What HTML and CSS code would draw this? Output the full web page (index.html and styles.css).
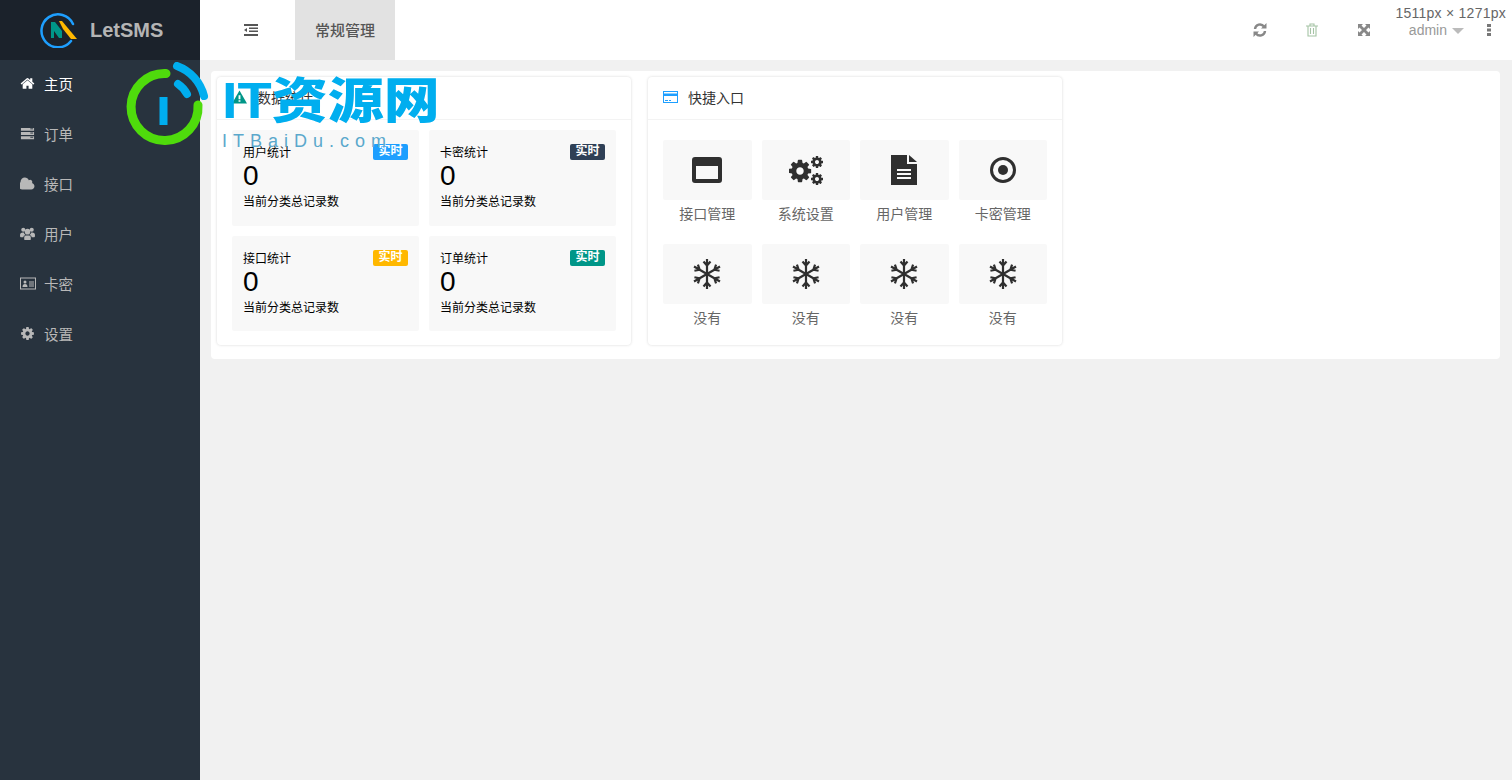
FILE: index.html
```html
<!DOCTYPE html>
<html lang="en">
<head>
    <meta charset="UTF-8">
    <title>LetSMS</title>
    <link rel="stylesheet" href="styles.css">
</head>
<body>
    <svg class="defs" width="0" height="0">
        <symbol id="i-cog" viewBox="0 0 1792 1792"><path d="M1152 896q0-106-75-181t-181-75-181 75-75 181 75 181 181 75 181-75 75-181zm512-109v222q0 12-8 23t-20 13l-185 28q-19 54-39 91 35 50 107 138 10 12 10 25t-9 23q-27 37-99 108t-94 71q-12 0-26-9l-138-108q-44 23-91 38-16 136-29 186-7 28-36 28h-222q-14 0-24.500-8.500t-11.500-21.500l-28-184q-49-16-90-37l-141 107q-10 9-25 9-14 0-25-11-126-114-165-168-7-10-7-23 0-12 8-23 15-21 51-66.500t54-70.500q-27-50-41-99l-183-27q-13-2-21-12.500t-8-23.500v-222q0-12 8-23t19-13l186-28q14-46 39-92-40-57-107-138-10-12-10-24 0-10 9-23 26-36 98.500-107.500t94.500-71.500q13 0 26 10l138 107q44-23 91-38 16-136 29-186 7-28 36-28h222q14 0 24.500 8.500t11.500 21.500l28 184q49 16 90 37l142-107q9-9 24-9 13 0 25 10 129 119 165 170 7 8 7 22 0 12-8 23-15 21-51 66.500t-54 70.500q26 50 41 98l183 28q13 2 21 12.500t8 23.500z"/></symbol>
        <symbol id="i-snow" viewBox="0 0 30 30">
            <g fill="none" stroke="currentColor" stroke-width="2.200">
                <g id="snow-arm"><path d="M15 15V0M11.500 2.500l3.500 4 3.500-4M15 15v15M11.500 27.500l3.500-4 3.500 4"/></g>
                <use href="#snow-arm" transform="rotate(60 15 15)"/>
                <use href="#snow-arm" transform="rotate(120 15 15)"/>
            </g>
        </symbol>
    </svg>

    <aside class="sidebar">
        <div class="logo">
            <svg class="logo-mark" width="38" height="36" viewBox="0 0 38 36">
                <path d="M31 29A16.500 16.500 0 1 1 33 12" fill="none" stroke="#1e9fff" stroke-width="2.500" stroke-linecap="round"/>
                <path d="M11 26V10h4l7 9v7h-3l-5-7v7z" fill="#009688"/>
                <path d="M19 9h3l15 18h-6l-8-10z" fill="#ffb800"/>
            </svg>
            <span class="logo-text">LetSMS</span>
        </div>
        <ul class="menu">
            <li class="menu-item active">
                <svg class="menu-icon" viewBox="0 0 1792 1792"><path d="M1472 992v480q0 26-19 45t-45 19h-384v-384h-256v384h-384q-26 0-45-19t-19-45v-480q0-1 .5-3t.5-3l575-474 575 474q1 2 1 6zm223-69l-62 74q-8 9-21 11h-3q-13 0-21-7l-692-577-692 577q-12 8-24 7-13-2-21-11l-62-74q-8-10-7-23.500t11-21.500l719-599q32-26 76-26t76 26l244 204v-195q0-14 9-23t23-9h192q14 0 23 9t9 23v408l219 182q10 8 11 21.500t-7 23.500z"/></svg>
                <span>主页</span>
            </li>
            <li class="menu-item">
                <svg class="menu-icon" viewBox="0 0 16 14"><path d="M1 1h14v3H1zM1 5.500h14v3H1zM1 10h14v3H1z"/><path d="M11 2h3M11 6.500h3M11 11h3" stroke="#28333e"/></svg>
                <span>订单</span>
            </li>
            <li class="menu-item">
                <svg class="menu-icon" viewBox="0 0 1792 1792"><path d="M1728 1216q0 159-112.500 271.500t-271.500 112.500h-1088q-185 0-316.500-131.500t-131.500-316.500q0-132 71-241.500t187-163.500q-2-28-2-43 0-212 150-362t362-150q158 0 286.500 88t187.500 230q70-62 166-62 106 0 181 75t75 181q0 75-41 138 129 30 213 134.500t84 239.500z"/></svg>
                <span>接口</span>
            </li>
            <li class="menu-item">
                <svg class="menu-icon" viewBox="0 0 16 14"><circle cx="3.500" cy="3" r="2.200"/><circle cx="12.500" cy="3" r="2.200"/><circle cx="8" cy="5" r="3"/><path d="M0 9q0-3 3-3h1q.5 2 2 2.500Q3.500 9 3.500 11H1q-1 0-1-2zM16 9q0-3-3-3h-1q-.5 2-2 2.500 2.500.5 2.500 2.500H15q1 0 1-2zM4.500 11q0-2 2-2h3q2 0 2 2v2q0 1-1 1h-5q-1 0-1-1z"/></svg>
                <span>用户</span>
            </li>
            <li class="menu-item">
                <svg class="menu-icon wide" viewBox="0 0 16 12"><path fill-rule="evenodd" d="M0 0h16v12H0zM1 1v10h14V1z"/><circle cx="5" cy="4.500" r="1.500"/><path d="M2.500 9.500q0-3 2.500-3t2.500 3zM9 4h5v1H9zM9 6h5v1H9zM9 8h5v1H9z"/></svg>
                <span>卡密</span>
            </li>
            <li class="menu-item">
                <svg class="menu-icon" viewBox="0 0 1792 1792"><use href="#i-cog"/></svg>
                <span>设置</span>
            </li>
        </ul>
    </aside>

    <div class="main">
        <header class="topbar">
            <div class="toggle">
                <svg width="14" height="12" viewBox="0 0 14 12" fill="#555"><path d="M0 0h14v2H0zM5 3.500h9V5H5zM5 6.500h9V8H5zM0 10h14v2H0zM0 6l3-2v4z"/></svg>
            </div>
            <div class="tab">常规管理</div>
            <div class="tools">
                <svg class="tool" viewBox="0 0 14 14" fill="none" stroke="#888" stroke-width="2.400"><path d="M2 6a5 5 0 0 1 9-2.500M12 8a5 5 0 0 1-9 2.500"/><path d="M13.500 0v5.500H8zM.5 14V8.500H6z" fill="#888" stroke="none"/></svg>
                <svg class="tool" viewBox="0 0 12 14" fill="none" stroke="#a5c4a5" stroke-width="1.100"><path d="M0 3h12M4 3V1h4v2M2 3v10h8V3M4.500 5v6M7.500 5v6"/></svg>
                <svg class="tool" viewBox="0 0 14 14" fill="#888"><path d="M1 1h5L4.500 2.500 7 5l2.500-2.500L8 1h5v5l-1.500-1.500L9 7l2.500 2.500L13 8v5H8l1.500-1.500L7 9l-2.500 2.500L6 13H1V8l1.500 1.500L5 7 2.500 4.500 1 6z"/></svg>
                <div class="user">
                    <span>admin</span>
                    <i class="caret"></i>
                </div>
                <svg class="more" width="4" height="12" viewBox="0 0 4 12" fill="#777"><path d="M0 0h4v3H0zM0 4.500h4v3H0zM0 9h4v3H0z"/></svg>
            </div>
        </header>

        <div class="content">
            <div class="panel">
                <section class="card">
                    <div class="card-head">
                        <svg class="head-icon" viewBox="0 0 16 14"><path fill="#009688" d="M8 0l8 14H0z"/><path fill="#fff" d="M7 5h2v4.500H7zM7 10.500h2V12H7z"/></svg>
                        <span>数据统计</span>
                    </div>
                    <div class="stats">
                        <div class="stat">
                            <div class="stat-top"><span>用户统计</span><span class="badge blue">实时</span></div>
                            <div class="stat-num">0</div>
                            <div>当前分类总记录数</div>
                        </div>
                        <div class="stat">
                            <div class="stat-top"><span>卡密统计</span><span class="badge navy">实时</span></div>
                            <div class="stat-num">0</div>
                            <div>当前分类总记录数</div>
                        </div>
                        <div class="stat">
                            <div class="stat-top"><span>接口统计</span><span class="badge amber">实时</span></div>
                            <div class="stat-num">0</div>
                            <div>当前分类总记录数</div>
                        </div>
                        <div class="stat">
                            <div class="stat-top"><span>订单统计</span><span class="badge teal">实时</span></div>
                            <div class="stat-num">0</div>
                            <div>当前分类总记录数</div>
                        </div>
                    </div>
                </section>

                <section class="card">
                    <div class="card-head">
                        <svg class="head-icon" viewBox="0 0 15 12"><path fill="#1e9fff" fill-rule="evenodd" d="M0 0h15v12H0zM1 1v1.500h13V1zM1 5v6h13V5z"/><path fill="#1e9fff" d="M2 9h3v1H2zM6 9h2v1H6z"/></svg>
                        <span>快捷入口</span>
                    </div>
                    <div class="quick">
                        <div class="quick-item">
                            <div class="tile"><svg width="30" height="26" viewBox="0 0 30 26"><path fill="#2f2f2f" fill-rule="evenodd" d="M3 0h24q3 0 3 3v20q0 3-3 3H3q-3 0-3-3V3q0-3 3-3zM4 9v13h22V9z"/></svg></div>
                            <span>接口管理</span>
                        </div>
                        <div class="quick-item">
                            <div class="tile">
                                <svg class="cogs" width="34" height="30" viewBox="0 0 34 30" fill="#2f2f2f">
                                    <use href="#i-cog" x="-2" y="3" width="26" height="26"/>
                                    <use href="#i-cog" x="21" y="0" width="14" height="14"/>
                                    <use href="#i-cog" x="21" y="17" width="14" height="14"/>
                                </svg>
                            </div>
                            <span>系统设置</span>
                        </div>
                        <div class="quick-item">
                            <div class="tile"><svg width="26" height="30" viewBox="0 0 26 30"><path fill="#2f2f2f" d="M0 0h16v9h10v21H0z"/><path fill="#2f2f2f" d="M18 0l8 7h-8z"/><path fill="#f8f8f8" d="M6 14h14v2H6zM6 18h14v2H6zM6 22h14v2H6z"/></svg></div>
                            <span>用户管理</span>
                        </div>
                        <div class="quick-item">
                            <div class="tile"><svg width="26" height="26" viewBox="0 0 26 26"><circle cx="13" cy="13" r="11.500" fill="none" stroke="#2f2f2f" stroke-width="3"/><circle cx="13" cy="13" r="5" fill="#2f2f2f"/></svg></div>
                            <span>卡密管理</span>
                        </div>
                        <div class="quick-item">
                            <div class="tile"><svg class="snow" width="30" height="30"><use href="#i-snow"/></svg></div>
                            <span>没有</span>
                        </div>
                        <div class="quick-item">
                            <div class="tile"><svg class="snow" width="30" height="30"><use href="#i-snow"/></svg></div>
                            <span>没有</span>
                        </div>
                        <div class="quick-item">
                            <div class="tile"><svg class="snow" width="30" height="30"><use href="#i-snow"/></svg></div>
                            <span>没有</span>
                        </div>
                        <div class="quick-item">
                            <div class="tile"><svg class="snow" width="30" height="30"><use href="#i-snow"/></svg></div>
                            <span>没有</span>
                        </div>
                    </div>
                </section>
            </div>
        </div>
    </div>

    <!-- watermark over the page -->
    <div class="watermark">
        <svg width="84" height="84" viewBox="0 0 84 84" fill="none" stroke-linecap="round">
            <path d="M40 11.500A33.500 33.500 0 1 0 72 43" stroke="#4fdb0c" stroke-width="9"/>
            <path d="M51 4A43 43 0 0 1 78 34" stroke="#00aeef" stroke-width="8"/>
            <path d="M52 22A27 27 0 0 1 61 32" stroke="#00aeef" stroke-width="8"/>
            <rect x="33.500" y="35" width="8" height="28" fill="#00aeef"/>
        </svg>
        <div class="wm-text">
            <div class="wm-title">IT资源网</div>
            <div class="wm-sub">ITBaiDu.com</div>
        </div>
    </div>

    <div class="size-tip">1511px × 1271px</div>
</body>
</html>
```

FILE: styles.css
```css
* {
    box-sizing: border-box;
}

body {
    margin: 0;
    height: 100vh;
    display: flex;
    overflow: hidden;
    font-family: "Liberation Sans", "Noto Sans CJK SC", sans-serif;
    font-size: 14px;
    background-color: #f1f1f1;
}

.defs {
    position: absolute;
}

/* sidebar */
.sidebar {
    width: 200px;
    flex-shrink: 0;
    background-color: #28333e;
}

.logo {
    height: 60px;
    display: flex;
    align-items: center;
    padding-left: 40px;
    background-color: #1b222b;
}

.logo-text {
    margin-left: 12px;
    font-size: 20px;
    font-weight: bold;
    color: #b5b5b5;
}

.menu {
    list-style: none;
    margin: 0;
    padding: 0;
}

.menu-item {
    height: 50px;
    display: flex;
    align-items: center;
    padding-left: 20px;
    padding-bottom: 3px;
    font-size: 14.500px;
    color: #b8b8b8;
    fill: #b8b8b8;
}

.menu-item.active {
    color: #fff;
    fill: #fff;
}

.menu-icon {
    width: 15px;
    height: 15px;
    margin-right: 9px;
}

.menu-icon.wide {
    width: 16px;
    margin-right: 8px;
}

/* top bar */
.main {
    flex: 1;
    display: flex;
    flex-direction: column;
}

.topbar {
    height: 60px;
    display: flex;
    background-color: #fff;
}

.toggle {
    width: 95px;
    display: flex;
    align-items: center;
    justify-content: center;
    padding-left: 6px;
}

.tab {
    width: 100px;
    display: flex;
    align-items: center;
    justify-content: center;
    padding-bottom: 1px;
    background-color: #e2e2e2;
    font-size: 15px;
    font-weight: 500;
    color: #555;
}

.tools {
    margin-left: auto;
    display: flex;
    align-items: center;
    padding-right: 20px;
    color: #999;
}

.tool {
    width: 14px;
    height: 14px;
    margin-right: 38px;
}

.user {
    display: flex;
    align-items: center;
    margin-right: 23px;
}

.caret {
    width: 0;
    height: 0;
    margin-left: 5px;
    margin-top: 2px;
    border-left: 6px solid transparent;
    border-right: 6px solid transparent;
    border-top: 6px solid #bbb;
}

.more {
    margin-right: 1px;
}

/* content */
.content {
    flex: 1;
    padding: 11px 12px 0 11px;
}

.panel {
    display: flex;
    align-items: flex-start;
    gap: 17px;
    padding: 6px;
    height: 288px;
    background-color: #fff;
    border-radius: 4px;
}

.card {
    width: 414px;
    height: 268px;
    background-color: #fff;
    border-radius: 4px;
    box-shadow: 0 0 3px rgba(0, 0, 0, 0.16);
}

.card-head {
    height: 43px;
    display: flex;
    align-items: center;
    gap: 10px;
    padding-left: 15px;
    padding-bottom: 2px;
    border-bottom: 1px solid #f3f3f3;
    color: #333;
}

.head-icon {
    width: 15px;
    height: 14px;
}

.stats {
    display: grid;
    grid-template-columns: 187px 187px;
    grid-auto-rows: 95.500px;
    gap: 10px;
    padding: 10px 15px;
}

.stat {
    padding: 15px 11px 0;
    background-color: #f8f8f8;
    border-radius: 2px;
    font-size: 12px;
    line-height: 16px;
    color: #000;
}

.stat-top {
    display: flex;
    justify-content: space-between;
}

.stat-num {
    font-size: 28px;
    line-height: 32px;
    margin-top: -1px;
    margin-bottom: 2px;
}

.badge {
    width: 35px;
    height: 16px;
    margin-top: -1px;
    text-align: center;
    border-radius: 2px;
    font-weight: bold;
    line-height: 15px;
    color: #fff;
}

.blue { background-color: #1e9fff; }
.navy { background-color: #2f4056; }
.amber { background-color: #ffb800; }
.teal { background-color: #009688; }

.quick {
    display: grid;
    grid-template-columns: repeat(4, 88.500px);
    grid-auto-rows: 94px;
    gap: 10px;
    padding: 20px 15px;
}

.quick-item {
    display: flex;
    flex-direction: column;
    align-items: center;
    color: #666;
}

.tile {
    width: 100%;
    height: 60px;
    margin-bottom: 3px;
    display: flex;
    align-items: center;
    justify-content: center;
    background-color: #f8f8f8;
    border-radius: 2px;
}

.snow {
    color: #2f2f2f;
}

/* overlays */
.watermark {
    position: absolute;
    left: 126px;
    top: 62px;
    display: flex;
    pointer-events: none;
}

.wm-text {
    margin-left: 12px;
}

.wm-title {
    margin-top: 13px;
    font-size: 56px;
    line-height: 60px;
    font-weight: 900;
    color: #00aeef;
    white-space: nowrap;
    transform: scaleY(0.88);
    transform-origin: top;
}

.wm-sub {
    margin-top: -5px;
    font-size: 18px;
    line-height: 22px;
    letter-spacing: 6px;
    color: #5ba8cc;
}

.size-tip {
    position: absolute;
    top: 5px;
    right: 6px;
    font-size: 14px;
    line-height: 16px;
    letter-spacing: 0.25px;
    color: #666;
}
```
